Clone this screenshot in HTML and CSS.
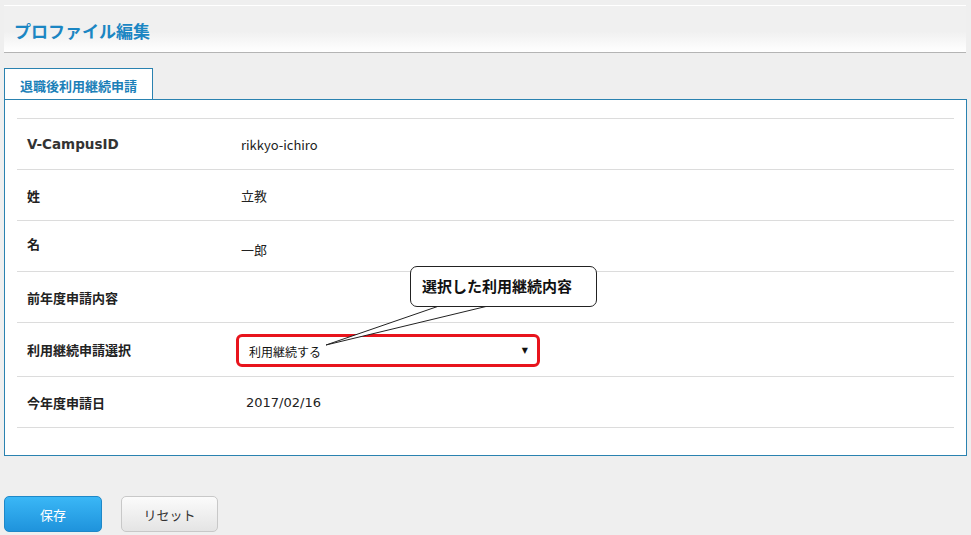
FILE: index.html
```html
<!DOCTYPE html>
<html lang="ja">
<head>
<meta charset="utf-8">
<title>プロファイル編集</title>
<link rel="stylesheet" href="styles.css">
</head>
<body>
<div class="page">
  <header class="page-header">
    <h1 class="page-title">プロファイル編集</h1>
  </header>

  <div class="tabs">
    <div class="tab">退職後利用継続申請</div>
  </div>

  <section class="panel">
    <div class="rows">
      <div class="row">
        <div class="label latin">V-CampusID</div>
        <div class="value plain">rikkyo-ichiro</div>
      </div>
      <div class="row">
        <div class="label">姓</div>
        <div class="value">立教</div>
      </div>
      <div class="row row-name">
        <div class="label">名</div>
        <div class="value">一郎</div>
      </div>
      <div class="row">
        <div class="label">前年度申請内容</div>
        <div class="value"></div>
      </div>
      <div class="row row-select">
        <div class="label">利用継続申請選択</div>
        <div class="value">
          <div class="select">
            <span class="select-text">利用継続する</span>
            <span class="select-arrow">▼</span>
          </div>
        </div>
      </div>
      <div class="row">
        <div class="label">今年度申請日</div>
        <div class="value date">2017/02/16</div>
      </div>
    </div>

    <svg class="callout-tail" width="963" height="356" viewBox="0 0 963 356">
      <path d="M434 206 L321 245 L483 206 Z" fill="#fff" stroke="none"/>
      <path d="M434 206 L321 245 L483 206" fill="none" stroke="#222" stroke-width="1"/>
    </svg>
    <div class="callout">選択した利用継続内容</div>
  </section>

  <div class="actions">
    <button class="btn btn-primary">保存</button>
    <button class="btn btn-default">リセット</button>
  </div>
</div>
</body>
</html>
```

FILE: styles.css
```css
html, body {
  margin: 0;
  padding: 0;
  background: #efefef;
}

body {
  font-family: "DejaVu Sans", "Noto Sans CJK JP", sans-serif;
  color: #222;
}

.page {
  padding: 5px 5px 0 4px;
  width: 963px;
}

.page-header {
  height: 46px;
  border-top: 1px solid #ffffff;
  border-bottom: 1px solid #b4b4b4;
  background: linear-gradient(to bottom, #f0f0f0 0%, #f0f0f0 55%, #ffffff 100%);
  display: flex;
  align-items: center;
  padding-left: 10px;
  width: 952px;
}

.page-title {
  margin: 0;
  font-family: "Noto Sans CJK JP", sans-serif;
  font-size: 17px;
  font-weight: 700;
  color: #1b86c3;
  line-height: 1;
  position: relative;
  top: 1px;
}

.tabs {
  display: flex;
  margin-top: 15px;
}

.tab {
  width: 149px;
  height: 31px;
  border: 1px solid #2a82b0;
  border-bottom: none;
  background: #fff;
  font-family: "Noto Sans CJK JP", sans-serif;
  font-size: 13px;
  font-weight: 700;
  color: #1b7fb8;
  display: flex;
  align-items: center;
  justify-content: center;
  padding-top: 2px;
  box-sizing: border-box;
}

.panel {
  position: relative;
  background: #fff;
  border: 1px solid #2a82b0;
  padding: 18px 12px 27px 12px;
  width: 937px;
}

.rows {
  border-top: 1px solid #dcdcdc;
}

.row {
  display: flex;
  align-items: center;
  height: 50px;
  border-bottom: 1px solid #dcdcdc;
  padding-left: 10px;
}

.row-select {
  height: 53px;
}

.label {
  width: 214px;
  flex: none;
  font-family: "Noto Sans CJK JP", sans-serif;
  font-size: 13px;
  font-weight: 700;
  color: #222;
}

.label.latin {
  font-family: "DejaVu Sans", sans-serif;
  font-size: 13.5px;
  color: #333;
}

.value {
  font-family: "Noto Sans CJK JP", sans-serif;
  font-size: 13px;
  color: #222;
}

.row-name .label {
  position: relative;
  top: -3px;
}

.row-name .value {
  position: relative;
  top: 3px;
}

.value.date {
  font-family: "DejaVu Sans", sans-serif;
  font-size: 13px;
  padding-left: 5px;
}

.select {
  margin-left: -5px;
  margin-top: 1px;
  width: 279px;
  height: 27px;
  border: 3px solid #e8141c;
  border-radius: 6px;
  background: #fff;
  display: flex;
  align-items: center;
  justify-content: space-between;
  padding: 0 9px 0 10px;
  box-sizing: content-box;
}

.select-text {
  font-family: "Noto Sans CJK JP", sans-serif;
  font-size: 12px;
  color: #111;
  position: relative;
  top: 1px;
}

.select-arrow {
  font-size: 8px;
  color: #111;
  font-family: "DejaVu Sans", sans-serif;
}

.callout-tail {
  position: absolute;
  left: 0;
  top: 0;
  pointer-events: none;
}

.callout {
  position: absolute;
  left: 405px;
  top: 166px;
  width: 187px;
  height: 41px;
  border: 1px solid #222;
  border-radius: 7px;
  background: #fff;
  font-family: "Noto Sans CJK JP", sans-serif;
  font-size: 15px;
  font-weight: 700;
  color: #111;
  display: flex;
  align-items: center;
  padding-left: 11px;
  padding-bottom: 2px;
  box-sizing: border-box;
}

.actions {
  display: flex;
  gap: 19px;
  margin-top: 40px;
}

.btn {
  width: 97px;
  height: 36px;
  border-radius: 5px;
  font-family: "Noto Sans CJK JP", sans-serif;
  font-size: 13px;
  padding: 0;
  cursor: pointer;
}

.btn-primary {
  width: 98px;
  border: 1px solid #1e88c8;
  background: linear-gradient(to bottom, #3ab7f6 0%, #1f93dc 100%);
  color: #fff;
}

.btn-default {
  border: 1px solid #c8c8c8;
  background: linear-gradient(to bottom, #fbfbfb 0%, #e4e4e4 100%);
  color: #333;
}
```
